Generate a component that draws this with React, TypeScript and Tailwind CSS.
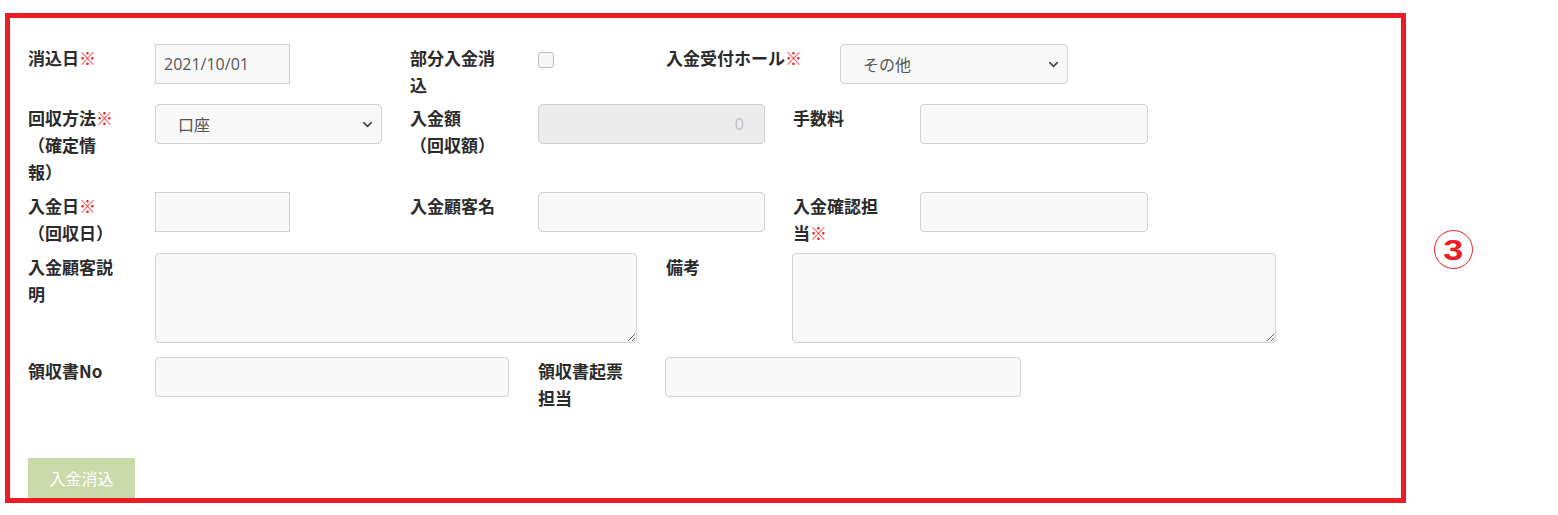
import React from 'react';
import { ChevronDown } from 'lucide-react';

const Req = () => <span className="text-[#ee1c25]">※</span>;

type LabelProps = { lines: React.ReactNode[]; width?: string };

const Label = ({ lines, width = 'w-[127px]' }: LabelProps) => (
  <div className={`${width} shrink-0 text-[17px] leading-[27px] font-bold text-[#2b2b2b]`}>
    {lines.map((line, i) => (
      <div key={i} className="whitespace-nowrap">
        {line}
      </div>
    ))}
  </div>
);

const TextInput = ({
  width,
  value = '',
  square = false,
}: {
  width: string;
  value?: string;
  square?: boolean;
}) => (
  <input
    type="text"
    defaultValue={value}
    className={`${width} h-[40px] shrink-0 border border-[#d2d2d2] bg-[#f8f8f8] px-[8px] text-[16px] text-[#555] outline-none ${
      square ? '' : 'rounded-[4px]'
    }`}
  />
);

const Select = ({ width, value }: { width: string; value: string }) => (
  <div className={`relative ${width} h-[40px] shrink-0`}>
    <select
      defaultValue={value}
      className="h-full w-full appearance-none rounded-[4px] border border-[#d2d2d2] bg-[#f8f8f8] pl-[22px] text-[16px] text-[#555] outline-none"
    >
      <option>{value}</option>
    </select>
    <ChevronDown
      className="pointer-events-none absolute right-[7px] top-[13px] h-[15px] w-[15px] text-[#444]"
      strokeWidth={2.5}
    />
  </div>
);

const TextArea = ({ width }: { width: string }) => (
  <textarea
    className={`${width} block h-[90px] shrink-0 rounded-[4px] border border-[#d2d2d2] bg-[#f8f8f8] outline-none`}
  />
);

export default function App() {
  return (
    <div
      className="flex min-h-[515px] w-[1558px] items-start bg-white"
      style={{ fontFamily: '"Open Sans", "Noto Sans CJK JP", sans-serif' }}
    >
      {/* 3 : payment clearing form */}
      <div className="ml-[5px] mt-[13px] h-[490px] w-[1401px] shrink-0 overflow-hidden border-[5px] border-[#ee1c25] pl-[18px] pt-[26px]">
        <div className="flex flex-col font-['Noto_Sans_CJK_JP',sans-serif]">
          {/* row 1 */}
          <div className="mb-[6px] flex items-start gap-[28px]">
            <div className="flex w-[354px] items-start">
              <Label lines={[<>消込日<Req /></>]} />
              <input
                type="text"
                defaultValue="2021/10/01"
                className="h-[40px] w-[135px] border border-[#d2d2d2] bg-[#f8f8f8] px-[8px] font-['Open_Sans',sans-serif] text-[16px] text-[#555] outline-none"
              />
            </div>
            <div className="flex w-[228px] items-start">
              <Label width="w-[128px]" lines={['部分入金消', '込']} />
              <span className="mt-[8px] block h-[16px] w-[16px] rounded-[3px] border border-[#bdbdbd] bg-[#f6f6f6]" />
            </div>
            <div className="flex items-start">
              <Label width="w-[174px]" lines={[<>入金受付ホール<Req /></>]} />
              <Select width="w-[228px]" value="その他" />
            </div>
          </div>

          {/* row 2 */}
          <div className="mb-[7px] flex items-start gap-[28px]">
            <div className="flex items-start">
              <Label lines={[<>回収方法<Req /></>, '（確定情', '報）']} />
              <Select width="w-[227px]" value="口座" />
            </div>
            <div className="flex items-start">
              <Label width="w-[128px]" lines={['入金額', '（回収額）']} />
              <input
                type="text"
                disabled
                defaultValue="0"
                className="h-[40px] w-[227px] rounded-[4px] border border-[#d2d2d2] bg-[#ececec] pr-[20px] text-right font-['Open_Sans',sans-serif] text-[16px] text-[#bbb] outline-none"
              />
            </div>
            <div className="flex items-start">
              <Label lines={['手数料']} />
              <TextInput width="w-[228px]" />
            </div>
          </div>

          {/* row 3 */}
          <div className="mb-[7px] flex items-start gap-[28px]">
            <div className="flex w-[354px] items-start">
              <Label lines={[<>入金日<Req /></>, '（回収日）']} />
              <TextInput width="w-[135px]" square />
            </div>
            <div className="flex items-start">
              <Label width="w-[128px]" lines={['入金顧客名']} />
              <TextInput width="w-[227px]" />
            </div>
            <div className="flex items-start">
              <Label lines={['入金確認担', <>当<Req /></>]} />
              <TextInput width="w-[228px]" />
            </div>
          </div>

          {/* row 4 */}
          <div className="mb-[14px] flex items-start gap-[29px]">
            <div className="flex items-start">
              <Label lines={['入金顧客説', '明']} />
              <TextArea width="w-[482px]" />
            </div>
            <div className="flex items-start">
              <Label width="w-[126px]" lines={['備考']} />
              <TextArea width="w-[484px]" />
            </div>
          </div>

          {/* row 5 */}
          <div className="flex items-start gap-[29px]">
            <div className="flex items-start">
              <Label lines={['領収書No']} />
              <TextInput width="w-[354px]" />
            </div>
            <div className="flex items-start">
              <Label lines={['領収書起票', '担当']} />
              <TextInput width="w-[356px]" />
            </div>
          </div>

          <div className="mt-[47px]">
            <button className="h-[40px] w-[107px] bg-[#cadaab] text-[16px] text-white">入金消込</button>
          </div>
        </div>
      </div>

      {/* annotation number */}
      <div className="ml-[28px] mt-[230px] flex h-[39px] w-[39px] shrink-0 items-center justify-center rounded-full border-[1.5px] border-[#ee1c25] font-['Liberation_Sans',sans-serif] text-[30px] font-bold leading-none text-[#ee1c25]">
        <span className="inline-block scale-x-[1.2]">3</span>
      </div>
    </div>
  );
}
